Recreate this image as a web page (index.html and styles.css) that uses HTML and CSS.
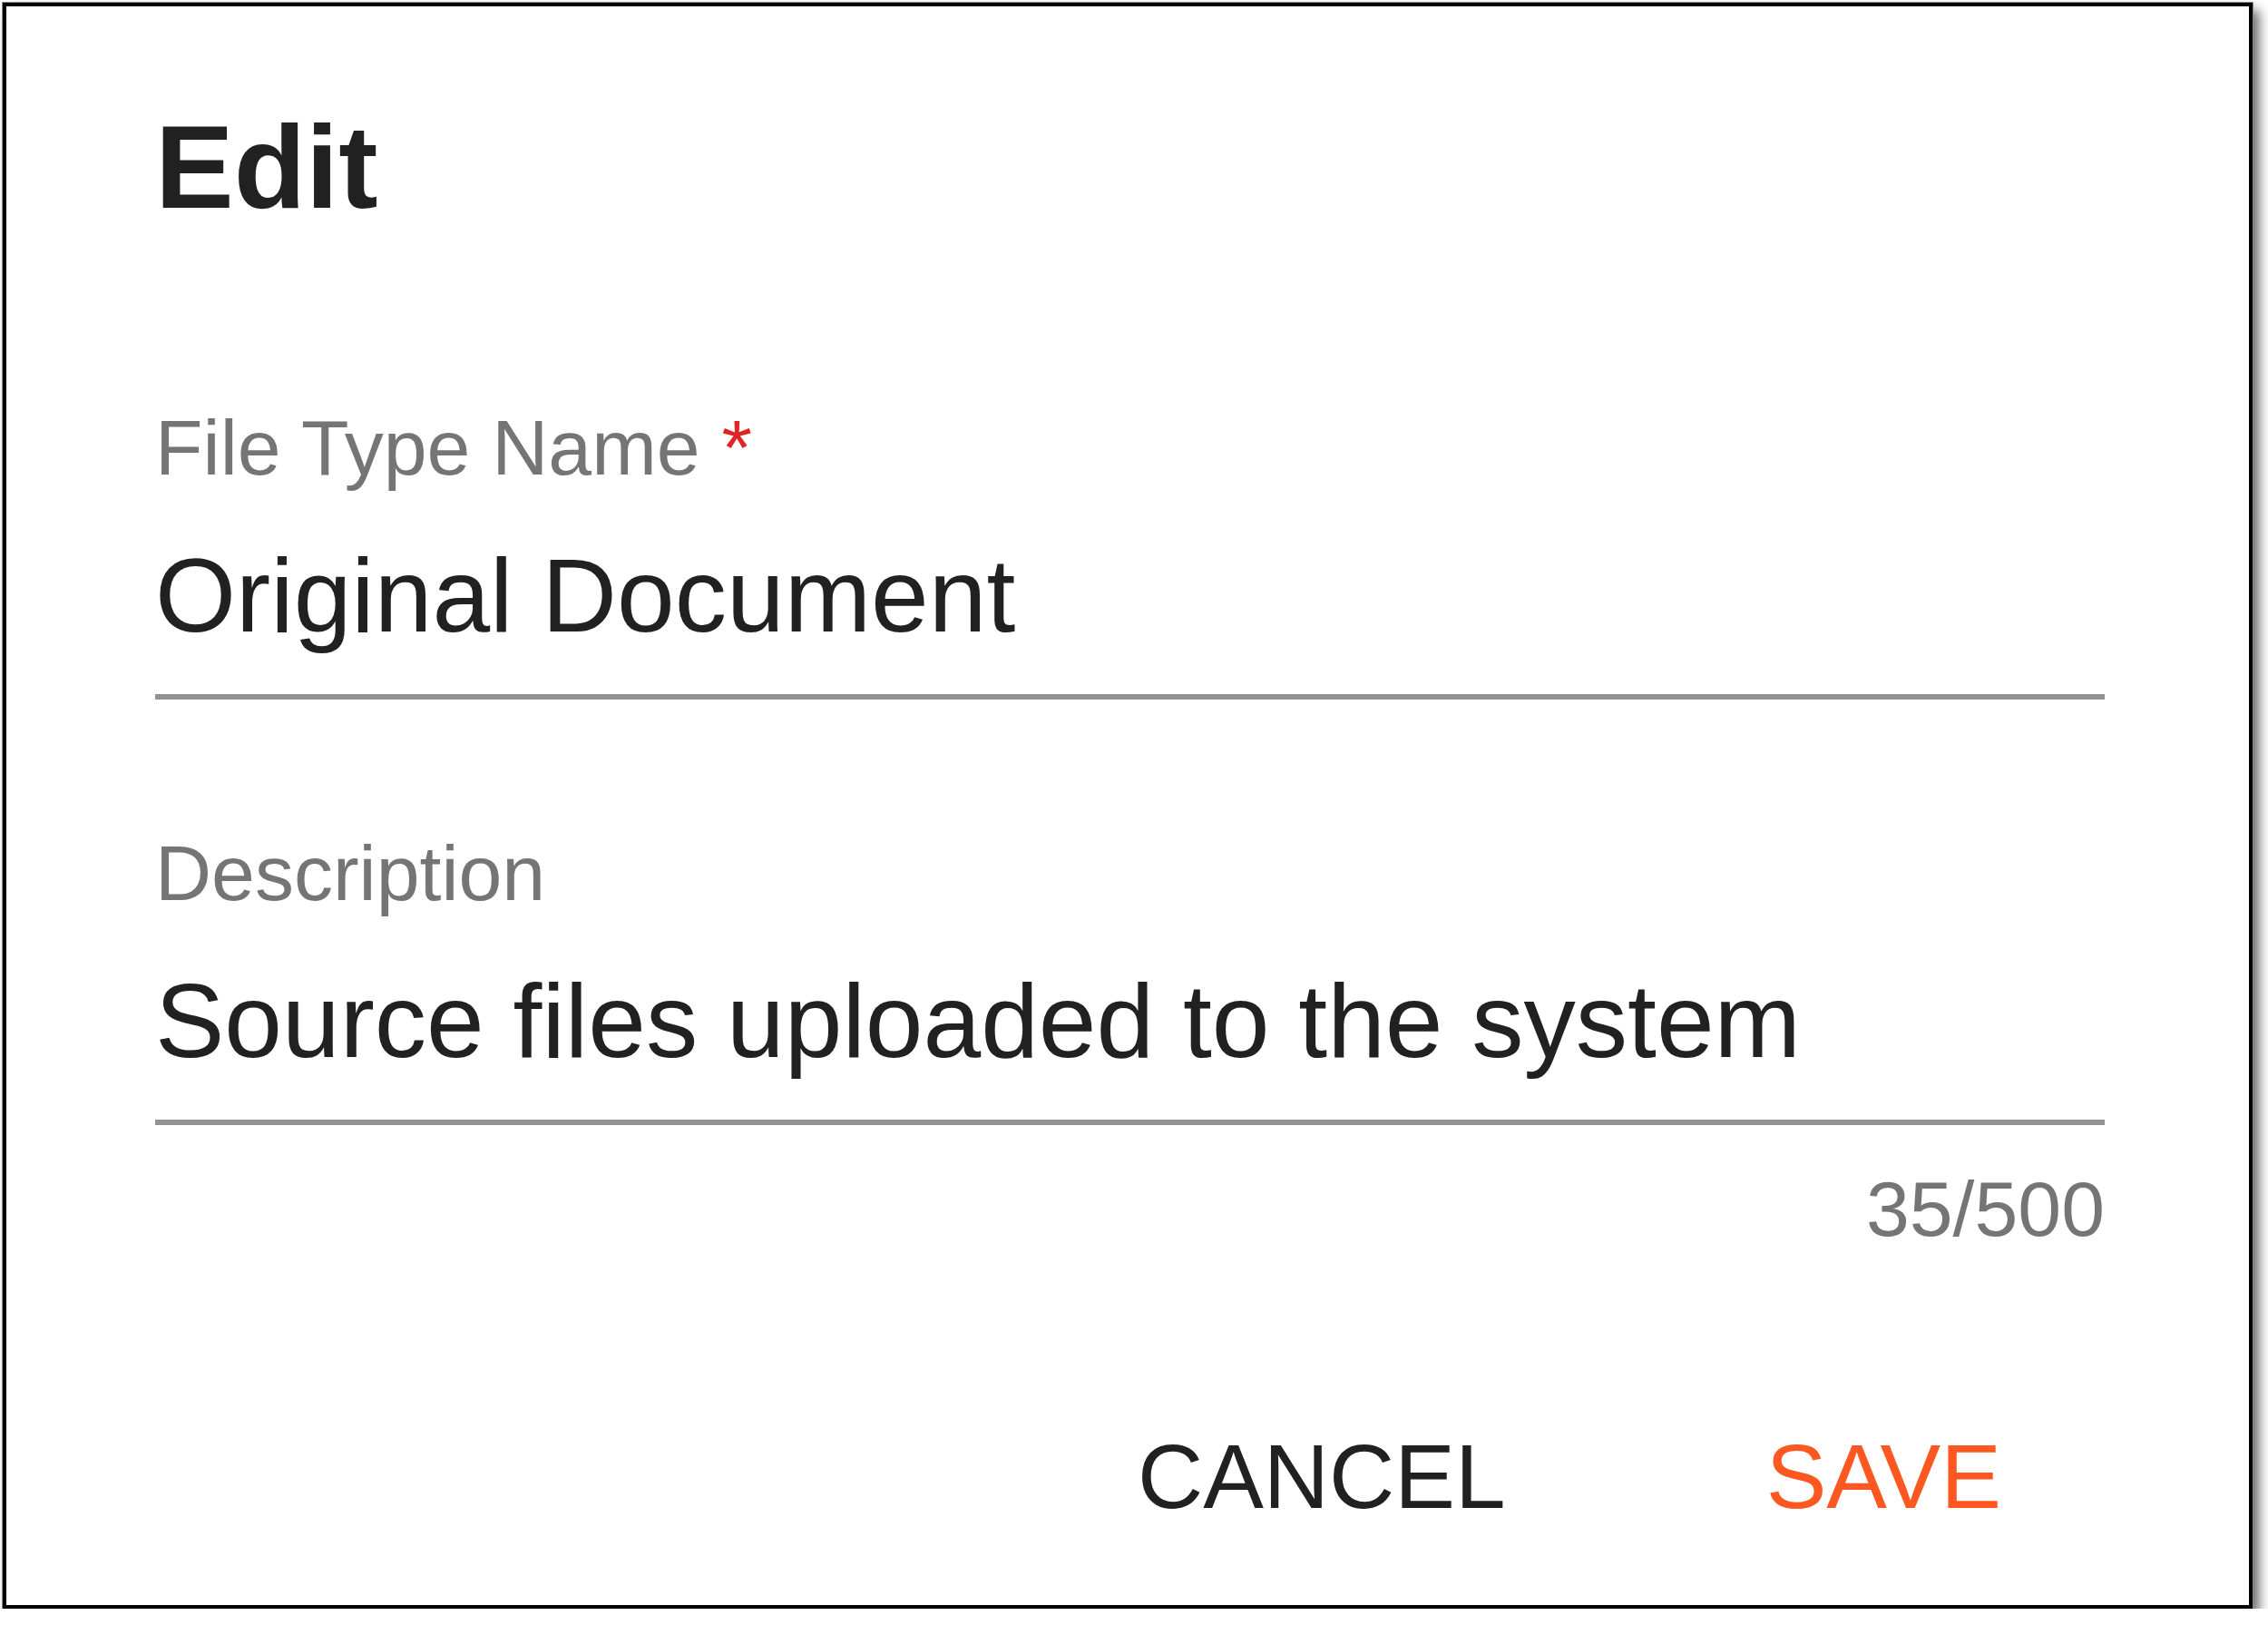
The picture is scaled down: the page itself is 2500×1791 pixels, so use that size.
FILE: index.html
```html
<!DOCTYPE html>
<html lang="en">
<head>
<meta charset="utf-8">
<title>Edit</title>
<link rel="stylesheet" href="styles.css">
</head>
<body>
<div class="dialog">
  <h2 class="dialog-title">Edit</h2>
  <div class="field">
    <label class="field-label">File Type Name <span class="required">*</span></label>
    <div class="field-input">Original Document</div>
  </div>
  <div class="field field-second">
    <label class="field-label">Description</label>
    <div class="field-input">Source files uploaded to the system</div>
    <div class="field-counter">35/500</div>
  </div>
  <div class="dialog-actions">
    <button class="btn btn-cancel">CANCEL</button>
    <button class="btn btn-save">SAVE</button>
  </div>
</div>
</body>
</html>
```
FILE: styles.css
```css
html, body {
  margin: 0;
  padding: 0;
  background: #ffffff;
}

body {
  font-family: "Liberation Sans", Arial, Helvetica, sans-serif;
  color: #212121;
}

.dialog {
  box-sizing: border-box;
  width: 2480px;
  margin: 3px 0 0 3px;
  background: #ffffff;
  border: 4px solid #000000;
  outline: 1px solid #8a8a8a;
  box-shadow: 7px 8px 12px rgba(0, 0, 0, 0.6);
  padding: 112px 159px 82px 164px;
}

.dialog-title {
  margin: 0;
  font-size: 130px;
  line-height: 130px;
  font-weight: 700;
  color: #212121;
}

.field {
  margin-top: 194px;
}

.field-second {
  margin-top: 141px;
}

.field-label {
  display: block;
  font-size: 86px;
  line-height: 100px;
  color: #757575;
}

.required {
  color: #e02424;
}

.field-input {
  margin-top: 43px;
  font-size: 114.5px;
  line-height: 140px;
  color: #212121;
  padding-bottom: 39px;
  border-bottom: 6px solid #929292;
  white-space: nowrap;
}

.field-counter {
  margin-top: 42px;
  font-size: 86px;
  line-height: 100px;
  color: #757575;
  text-align: right;
}

.dialog-actions {
  margin-top: 185px;
  display: flex;
  justify-content: flex-end;
  gap: 59px;
}

.btn {
  background: none;
  border: 0;
  margin: 0;
  padding: 0 114px;
  font-family: inherit;
  font-size: 100px;
  line-height: 120px;
  cursor: pointer;
}

.btn-cancel {
  color: #212121;
}

.btn-save {
  color: #ff5722;
}
```
